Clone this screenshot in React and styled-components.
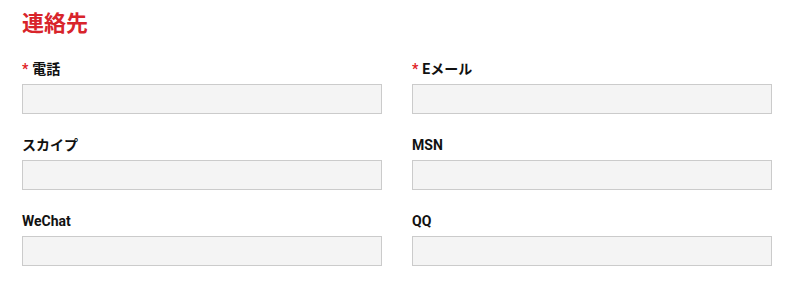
import React from "react";
import styled, { createGlobalStyle } from "styled-components";

const Global = createGlobalStyle`
  html, body { margin: 0; padding: 0; background: #fff; }
  body { font-family: Roboto, "Noto Sans CJK JP", sans-serif; }
`;

const Page = styled.div`
  padding: 10px 28px 0 22px;
`;

const Title = styled.h2`
  margin: 0 0 27px;
  font-family: "Noto Sans CJK JP", sans-serif;
  font-size: 22px;
  line-height: 22px;
  font-weight: 700;
  color: #d8242b;
`;

const Grid = styled.div`
  display: grid;
  grid-template-columns: 360px 360px;
  column-gap: 30px;
  row-gap: 21px;
`;

const Field = styled.div`
  display: flex;
  flex-direction: column;
  gap: 5px;
`;

const Label = styled.label`
  display: block;
  height: 20px;
  font-family: Roboto, "Noto Sans CJK JP", sans-serif;
  font-size: 14px;
  line-height: 20px;
  font-weight: 700;
  color: #111;
`;

const Req = styled.span`
  color: #e0201f;
  margin-right: 4px;
`;

const Input = styled.input`
  box-sizing: border-box;
  width: 360px;
  height: 30px;
  margin: 0;
  padding: 0 8px;
  background: #f4f4f4;
  border: 1px solid #cbcbcb;
  border-radius: 0;
  outline: none;
  font-family: Roboto, sans-serif;
  font-size: 14px;
`;

const fields = [
  { label: "電話", required: true },
  { label: "Eメール", required: true },
  { label: "スカイプ" },
  { label: "MSN" },
  { label: "WeChat" },
  { label: "QQ" },
];

export default function App() {
  return (
    <>
      <Global />
      <Page>
        <Title>連絡先</Title>
        <Grid>
          {fields.map((f) => (
            <Field key={f.label}>
              <Label>
                {f.required && <Req>*</Req>}
                {f.label}
              </Label>
              <Input type="text" />
            </Field>
          ))}
        </Grid>
      </Page>
    </>
  );
}
